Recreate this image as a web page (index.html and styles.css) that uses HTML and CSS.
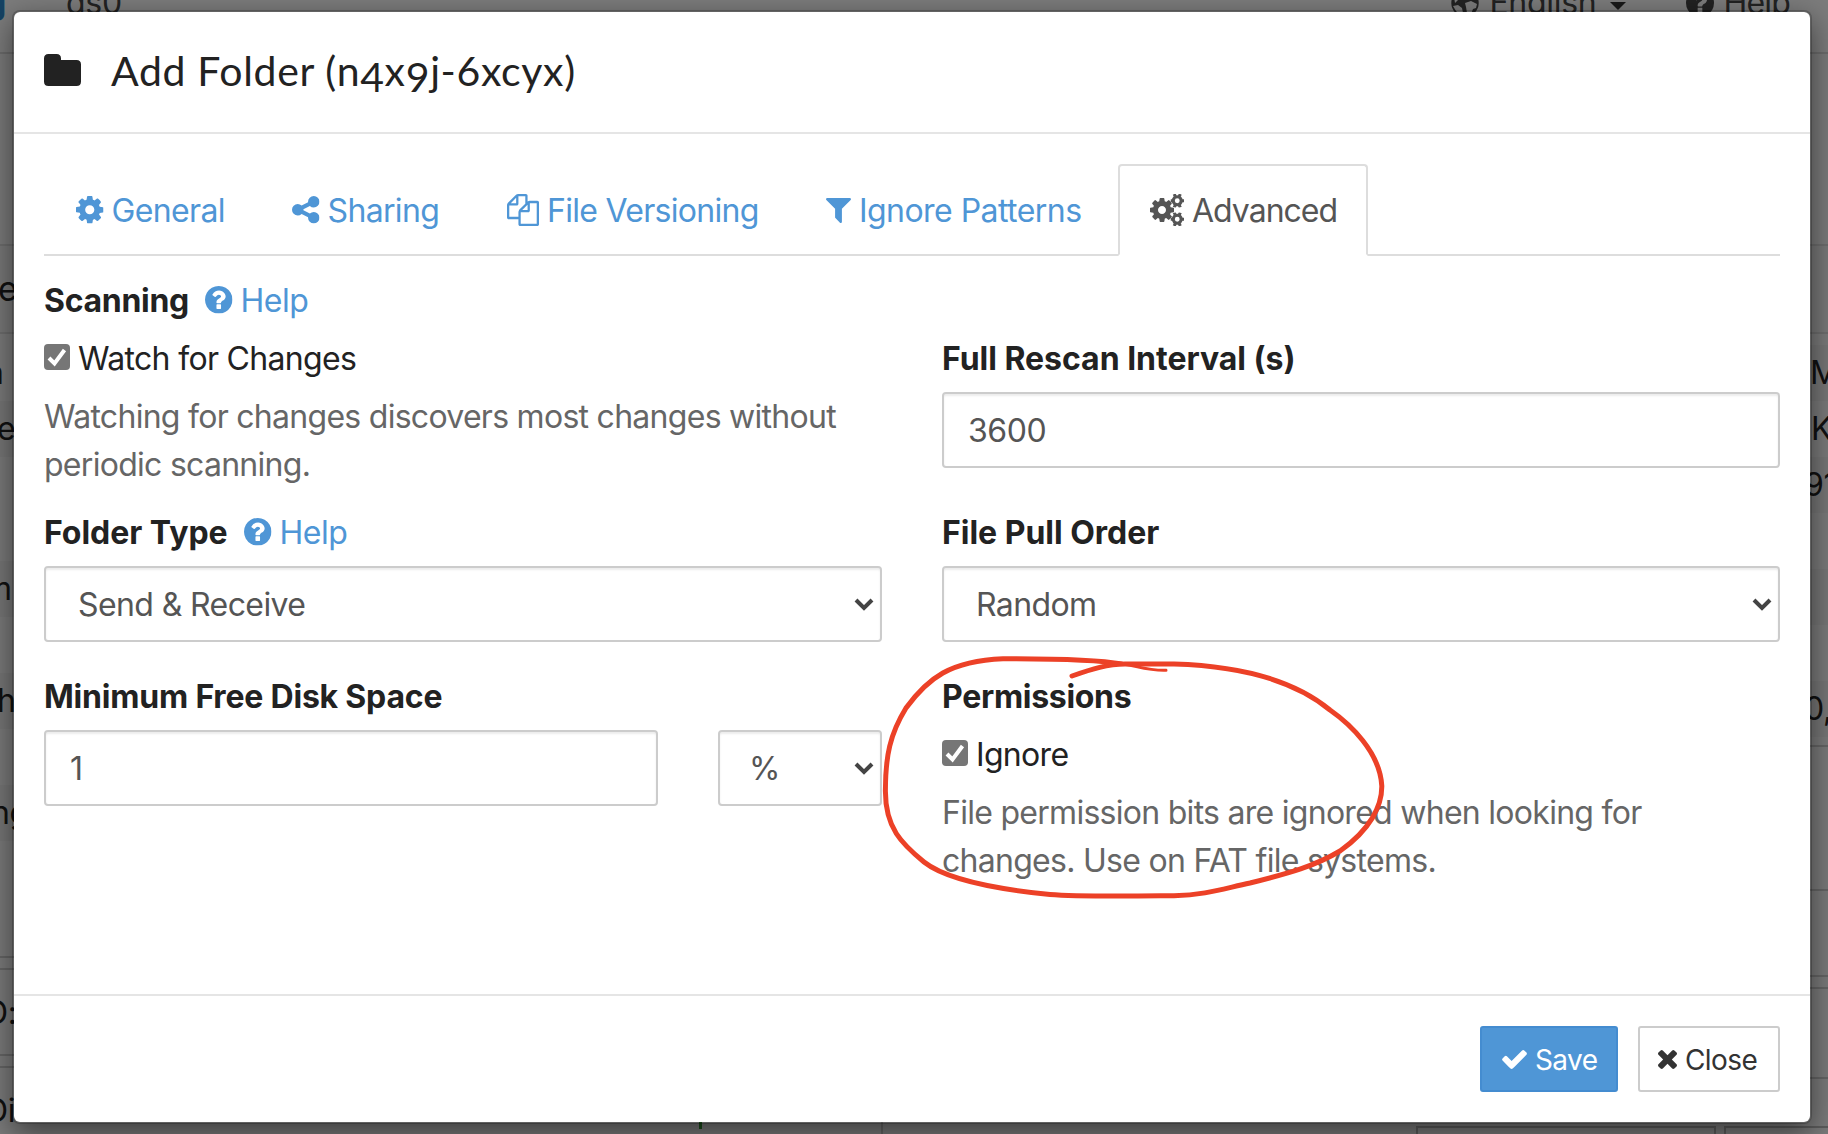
FILE: index.html
```html
<!DOCTYPE html>
<html lang="en">
<head>
<meta charset="utf-8">
<title>Add Folder</title>
<link rel="stylesheet" href="styles.css">
</head>
<body>
<svg class="sprite" aria-hidden="true">
  <symbol id="cog" viewBox="128 128 1536 1536"><path d="M1152 896q0-106-75-181t-181-75-181 75-75 181 75 181 181 75 181-75 75-181zm512-109v222q0 12-8 23t-20 13l-185 28q-19 54-39 91 35 50 107 138 10 12 10 25t-9 23q-27 37-99 108t-94 71q-12 0-26-9l-138-108q-44 23-91 38-16 136-29 186-7 28-36 28h-222q-14 0-24.500-8.500t-11.500-21.500l-28-184q-49-16-90-37l-141 107q-10 9-25 9-14 0-25-11-126-114-165-168-7-10-7-23 0-12 8-23 15-21 51-66.500t54-70.500q-27-50-41-99l-183-27q-13-2-21-12.500t-8-23.500v-222q0-12 8-23t19-13l186-28q14-46 39-92-40-57-107-138-10-12-10-24 0-10 9-23 26-36 98.500-107.500t94.500-71.500q13 0 26 10l138 107q44-23 91-38 16-136 29-186 7-28 36-28h222q14 0 24.500 8.500t11.500 21.500l28 184q49 16 90 37l142-107q9-9 24-9 13 0 25 10 129 119 165 170 7 8 7 22 0 12-8 23-15 21-51 66.500t-54 70.500q26 50 41 98l183 28q13 2 21 12.500t8 23.500z"/></symbol>
  <symbol id="share" viewBox="128 128 1536 1536"><path d="M1344 1024q133 0 226.500 93.500t93.500 226.500-93.500 226.500-226.500 93.500-226.500-93.500-93.500-226.500q0-12 2-34l-360-180q-92 86-218 86-133 0-226.500-93.500t-93.500-226.500 93.500-226.500 226.500-93.500q126 0 218 86l360-180q-2-22-2-34 0-133 93.500-226.500t226.500-93.500 226.500 93.500 93.500 226.500-93.500 226.500-226.500 93.500q-126 0-218-86l-360 180q2 22 2 34t-2 34l360 180q92-86 218-86z"/></symbol>
  <symbol id="files" viewBox="0 0 1792 1792"><path d="M1696 384q40 0 68 28t28 68v1216q0 40-28 68t-68 28h-960q-40 0-68-28t-28-68v-288h-544q-40 0-68-28t-28-68v-672q0-40 20-88t48-76l408-408q28-28 76-48t88-20h416q40 0 68 28t28 68v328q68-40 128-40h416zm-544 213l-299 299h299v-299zm-640-384l-299 299h299v-299zm196 647l316-316v-416h-384v416q0 40-28 68t-68 28h-416v640h512v-256q0-40 20-88t48-76zm956 804v-1152h-384v416q0 40-28 68t-68 28h-416v640h896z"/></symbol>
  <symbol id="filter" viewBox="192 256 1408 1408"><path d="M1595 295q17 41-14 70l-493 493v742q0 42-39 59-13 5-25 5-27 0-45-19l-256-256q-19-19-19-45v-486l-493-493q-31-29-14-70 17-39 59-39h1280q42 0 59 39z"/></symbol>
  <symbol id="gear-small" viewBox="-7 -7 14 14"><circle r="4.100" fill="none" stroke="currentColor" stroke-width="3.200"/><g stroke="currentColor" stroke-width="3.200"><path d="M-3.200-6.900l1.200 2.400M3.200-6.900l-1.200 2.400M-3.200 6.900l1.200-2.400M3.200 6.900l-1.200-2.400M-7 0h2.500M7 0h-2.500"/></g></symbol>
  <symbol id="question" viewBox="128 128 1536 1536"><path d="M1024 1376v-192q0-14-9-23t-23-9h-192q-14 0-23 9t-9 23v192q0 14 9 23t23 9h192q14 0 23-9t9-23zm256-672q0-88-55.500-163t-138.500-116-170-41q-243 0-371 213-15 24 8 42l132 100q7 6 19 6 16 0 25-12 53-68 86-92 34-24 86-24 48 0 85.500 26t37.500 59q0 38-20 61t-68 45q-63 28-115.500 86.500t-52.500 125.500v36q0 14 9 23t23 9h192q14 0 23-9t9-23q0-19 21.500-49.500t54.500-49.500q32-18 49-28.500t46-35 44.500-48 28-60.500 12.500-81zm384 192q0 209-103 385.500t-279.500 279.500-385.500 103-385.500-103-279.500-279.500-103-385.500 103-385.500 279.500-279.500 385.500-103 385.500 103 279.500 279.500 103 385.500z"/></symbol>
  <symbol id="check" viewBox="121 334 1550 1188"><path d="M1671 566q0 40-28 68l-724 724-136 136q-28 28-68 28t-68-28l-136-136-362-362q-28-28-28-68t28-68l136-136q28-28 68-28t68 28l294 295 656-657q28-28 68-28t68 28l136 136q28 28 28 68z"/></symbol>
  <symbol id="times" viewBox="302 366 1188 1188"><path d="M1490 1322q0 40-28 68l-136 136q-28 28-68 28t-68-28l-294-294-294 294q-28 28-68 28t-68-28l-136-136q-28-28-28-68t28-68l294-294-294-294q-28-28-28-68t28-68l136-136q28-28 68-28t68 28l294 294 294-294q28-28 68-28t68 28l136 136q28 28 28 68t-28 68l-294 294 294 294q28 28 28 68z"/></symbol>
  <symbol id="tick" viewBox="0 0 26 26"><path d="M5 14l5.500 5.500L20.500 6" fill="none" stroke="#fff" stroke-width="4"/></symbol>
  <symbol id="chevron" viewBox="0 0 20 13"><path d="M2 2l8 8 8-8" fill="none" stroke="#444" stroke-width="4"/></symbol>
</svg>

<div class="page" aria-hidden="true">
  <nav class="topbar">
    <span class="brand">g</span><span class="device">ds0</span>
    <span class="menu lang"><svg width="28" height="28" viewBox="0 0 28 28"><circle cx="14" cy="14" r="13.700"/><path fill="#f8f8f8" d="M2 17l5-1 4 3 1 5-3 2-4-4zM14 14l6-2 6 3-1 4-3 1-2 5-4-1-1-6zM3 8l6-5 5 2-3 5-4 1-3 3z"/></svg>English<i class="caret"></i></span>
    <span class="menu help"><svg width="28" height="28"><use href="#question"/></svg>Help</span>
  </nav>
  <div class="columns">
    <div class="folders">
      <div class="gap-a"></div>
      <div class="heading">e</div>
      <div class="line n">n</div>
      <div class="line stripe">e</div>
      <div class="line tall"></div>
      <div class="line stripe m">m</div>
      <div class="line"></div>
      <div class="line stripe">h</div>
      <div class="line"></div>
      <div class="line stripe ng">ng</div>
      <div class="panel-end"></div>
      <div class="box">D:</div>
      <div class="box">Di</div>
    </div>
    <div class="devices">
      <div class="gap-a"></div>
      <div class="heading"></div>
      <div class="line stripe">M</div>
      <div class="line k">K</div>
      <div class="line stripe d">91</div>
      <div class="line"></div>
      <div class="line stripe"></div>
      <div class="line"></div>
      <div class="line stripe d">0,</div>
      <div class="r-box1"></div>
      <div class="r-box2"></div>
      <div class="r-box3"></div>
      <div class="r-box4"></div>
    </div>
  </div>
  <div class="bottom"><i class="green"></i><i class="edge"></i><i class="btn-a"></i><i class="btn-b"></i></div>
</div>
<div class="backdrop"></div>

<main class="modal">
  <header class="modal-header">
    <svg width="37" height="32" viewBox="0 0 37 32"><path d="M4.500 0h8Q17 0 17 4.500V6h15.500Q37 6 37 10.500v17Q37 32 32.500 32h-28Q0 32 0 27.500v-23Q0 0 4.500 0z"/></svg>
    <h1>Add Folder (n<span class="low">4</span>x<span class="low">9</span>j-6xcyx)</h1>
  </header>

  <div class="modal-body">
    <nav class="tabs">
      <a class="tab t-general"><svg width="27.500" height="27.500"><use href="#cog"/></svg><span>General</span></a>
      <a class="tab t-sharing"><svg width="27.500" height="27.500"><use href="#share"/></svg><span>Sharing</span></a>
      <a class="tab t-version"><svg width="32" height="32"><use href="#files"/></svg><span>File Versioning</span></a>
      <a class="tab t-ignore"><svg width="25" height="25"><use href="#filter"/></svg><span>Ignore Patterns</span></a>
      <a class="tab t-adv active"><svg width="34" height="32" viewBox="0 0 34 32"><use href="#cog" x="0" y="4" width="24" height="24"/><use href="#gear-small" x="20.500" y="0" width="13.500" height="13.500"/><use href="#gear-small" x="20.500" y="18.500" width="13.500" height="13.500"/></svg><span>Advanced</span></a>
    </nav>

    <div class="label-row"><b class="l-scan">Scanning</b><a class="help-link"><svg width="27.500" height="27.500"><use href="#question"/></svg><span>Help</span></a></div>
    <div class="grid">
      <section>
        <div class="check"><svg width="26" height="26"><use href="#tick"/></svg><span>Watch for Changes</span></div>
        <p class="hint">Watching for changes discovers most changes without<br>periodic scanning.</p>
      </section>
      <section>
        <div class="label-row"><b class="wide">Full Rescan Interval (s)</b></div>
        <div class="control">3600</div>
      </section>
      <section>
        <div class="label-row"><b class="l-type wide">Folder Type</b><a class="help-link"><svg width="27.500" height="27.500"><use href="#question"/></svg><span>Help</span></a></div>
        <div class="control select">Send &amp; Receive<svg width="20" height="13"><use href="#chevron"/></svg></div>
      </section>
      <section>
        <div class="label-row"><b class="wide">File Pull Order</b></div>
        <div class="control select">Random<svg width="20" height="13"><use href="#chevron"/></svg></div>
      </section>
      <section>
        <div class="label-row"><b class="l-min">Minimum Free Disk Space</b></div>
        <div class="split">
          <div class="control">1</div>
          <div class="control select unit">%<svg width="20" height="13"><use href="#chevron"/></svg></div>
        </div>
      </section>
      <section>
        <div class="label-row"><b>Permissions</b></div>
        <div class="check"><svg width="26" height="26"><use href="#tick"/></svg><span>Ignore</span></div>
        <p class="hint">File permission bits are ignored when looking for<br>changes. Use on FAT file systems.</p>
      </section>
    </div>
  </div>

  <footer class="modal-footer">
    <button class="btn save"><svg width="25" height="19"><use href="#check"/></svg><span>Save</span></button>
    <button class="btn close"><svg width="19" height="19"><use href="#times"/></svg><span>Close</span></button>
  </footer>
</main>

<svg class="scribble" width="1828" height="1134" viewBox="0 0 1828 1134">
  <path class="tail" d="M1166 670.300C1148 671 1138 666 1115 662.500"/>
  <path d="M1122 664C1100 660 1060 658.500 1003 658.700C950 661 928 678 906 708C890 734 885.500 756 885.400 790C885 828 902 844 924 862C948 881 1005 890 1050 894.500C1080 897 1140 896 1174 895.700C1205 895 1222 889 1250 883C1290 873 1315 866 1340 851C1370 830 1382 806 1381.800 786C1380 752 1350 724 1330 710C1295 681 1240 666 1174 664H1125C1108 664 1092 669 1072 676"/>
</svg>
</body>
</html>
```
FILE: styles.css
```css
* { box-sizing: border-box; }
body {
  margin: 0;
  width: 1828px;
  height: 1134px;
  overflow: hidden;
  position: relative;
  background: #fff;
  color: #222;
  font: 32px/48px Inter, "Liberation Sans", sans-serif;
  letter-spacing: -0.3px;
}
svg { fill: currentColor; flex: none; }
.sprite { position: absolute; width: 0; height: 0; }

/* page behind the dialog */
.page { height: 1134px; overflow: hidden; background: #f6f6f6; }
.topbar {
  display: flex;
  height: 54px;
  border-bottom: 2px solid #d8d8d8;
  background: #f8f8f8;
  color: #444;
}
.topbar > * { margin-top: -21px; height: 48px; }
.brand { width: 66px; font-weight: 700; color: #2a86c8; text-indent: -14px; }
.menu { display: flex; align-items: center; gap: 10px; }
.topbar .lang { margin-left: auto; }
.topbar .help { margin: -21px 38px 0 60px; gap: 9px; letter-spacing: -0.8px; }
.caret { border: 8px solid transparent; border-top-color: #333; border-bottom: 0; margin: 6px 0 0 4px; }
.columns { display: flex; justify-content: space-between; color: #222; }
.folders { width: 40px; overflow: hidden; }
.devices { width: 20px; }
.gap-a { height: 192px; border-bottom: 2px solid #ddd; }
.heading { height: 88px; border-bottom: 2px solid #ddd; background: #f3f3f3; line-height: 86px; text-indent: -2px; font-size: 34px; }
.line { height: 56px; line-height: 56px; text-indent: -3px; white-space: nowrap; }
.heading + .line { margin-top: 11px; }
.folders .tall { height: 104px; }
.stripe { background: #eee; }
.line.n { text-indent: -15px; }
.line.m { text-indent: -16px; }
.line.ng { text-indent: -9px; }
.devices .line { text-indent: 2px; }
.devices .line.d { text-indent: -4px; }
.devices .line.k { text-indent: 3px; }
.panel-end { height: 117px; border-bottom: 2px solid #ccc; }
.box { height: 88px; margin-top: 10px; border: 2px solid #ccc; border-width: 2px 0; line-height: 86px; text-indent: -15px; }
.r-box1 { height: 10px; border-bottom: 2px solid #ccc; }
.r-box2 { height: 144px; border-bottom: 2px solid #ccc; }
.r-box3 { height: 86px; border-bottom: 2px solid #ccc; }
.r-box4 { height: 92px; margin-top: 10px; border: 2px solid #ccc; border-width: 2px 0; }
.bottom { position: absolute; left: 0; top: 1120px; display: flex; width: 1828px; height: 14px; }
.green { margin-left: 699px; width: 3px; height: 9px; background: #3a9c3a; }
.edge { margin-left: 179px; width: 2px; background: #ccc; }
.btn-a { margin: 6px 0 0 533px; width: 300px; border: 2px solid #bbb; border-bottom: 0; }
.btn-b { margin: 6px 0 0 8px; flex: 1; border: 2px solid #bbb; border-width: 2px 0 0 2px; }
.backdrop { position: absolute; inset: 0; background: rgba(0, 0, 0, .5); }

/* dialog */
.modal {
  position: absolute;
  left: 12px;
  top: 10px;
  width: 1800px;
  height: 1114px;
  display: flex;
  flex-direction: column;
  border: 2px solid rgba(0, 0, 0, .2);
  border-radius: 8px;
  background: #fff;
  background-clip: padding-box;
  box-shadow: 0 10px 30px rgba(0, 0, 0, .5);
}
.modal-header {
  display: flex;
  align-items: center;
  gap: 30px;
  height: 122px;
  padding: 0 30px 4px;
  border-bottom: 2px solid #e5e5e5;
}
h1 { margin: 0; padding-top: 2px; font: 41px/60px Lato, sans-serif; letter-spacing: 0.65px; }
.low { position: relative; top: 6px; }
.modal-body { flex: 1; padding: 30px; }

.tabs { display: flex; gap: 4px; border-bottom: 2px solid #ddd; margin-bottom: 20px; height: 92px; }
.tab {
  display: flex;
  align-items: center;
  gap: 8px;
  height: 92px;
  padding: 0 30px;
  border: 2px solid transparent;
  color: #4f96d6;
  white-space: nowrap;
}
.tab span, .help-link span, .check span, .btn span { padding-top: 2px; }
.tab.active { color: #555; background: #fff; border-color: #ddd; border-bottom-color: #fff; border-radius: 4px 4px 0 0; }
.t-general { width: 212px; letter-spacing: -0.65px; }
.t-sharing { width: 211px; letter-spacing: -0.65px; }
.t-version { width: 315px; letter-spacing: -0.7px; }
.t-ignore { width: 320px; letter-spacing: -0.55px; }
.t-adv { width: 250px; letter-spacing: -1px; }

.label-row { display: flex; height: 48px; margin-bottom: 10px; white-space: nowrap; }
.label-row b { padding-top: 1px; }
.help-link { display: flex; align-items: center; gap: 8px; color: #4f96d6; letter-spacing: -0.5px; }
.l-scan { width: 161px; }
.l-type { width: 200px; }
.l-min { letter-spacing: -0.2px; }
.wide { letter-spacing: -0.02px; }
.grid { display: grid; grid-template-columns: 838px 838px; column-gap: 60px; grid-template-rows: 174px 164px auto; }
.check { display: flex; align-items: center; gap: 8px; height: 48px; margin-bottom: 10px; letter-spacing: -0.68px; }
.check svg { background: #767676; border-radius: 4px; margin-bottom: 2px; }
.hint { margin: 0; padding-top: 1px; color: #666; white-space: nowrap; letter-spacing: -0.72px; }
.control {
  display: flex;
  align-items: center;
  height: 76px;
  padding: 2px 24px 0;
  border: 2px solid #ccc;
  border-radius: 4px;
  color: #555;
  letter-spacing: -0.4px;
  box-shadow: inset 0 2px 2px rgba(0, 0, 0, .075);
}
.select { justify-content: space-between; padding: 2px 6px 0 32px; letter-spacing: -0.6px; }
.select.unit { padding-left: 29px; }
.select svg { margin-bottom: 2px; }
.split { display: grid; grid-template-columns: 614px 164px; gap: 60px; }

.modal-footer { display: flex; justify-content: flex-end; gap: 20px; height: 128px; padding: 30px; border-top: 2px solid #e5e5e5; }
.btn {
  display: flex;
  align-items: center;
  gap: 8px;
  height: 66px;
  padding: 0 20px;
  border: 2px solid #ccc;
  border-radius: 3px;
  font: 28px/42px Inter, sans-serif;
  letter-spacing: -0.6px;
}
.save { width: 138px; background: #4f96d6; border-color: #448cd0; color: #fff; }
.close { width: 142px; background: #fff; color: #333; padding: 0 18px; }

/* hand-drawn highlight */
.scribble { position: absolute; left: 0; top: 0; pointer-events: none; }
.scribble path { fill: none; stroke: #ec4127; stroke-width: 5; stroke-linecap: round; stroke-linejoin: round; }
.scribble .tail { stroke-width: 3; }
```
